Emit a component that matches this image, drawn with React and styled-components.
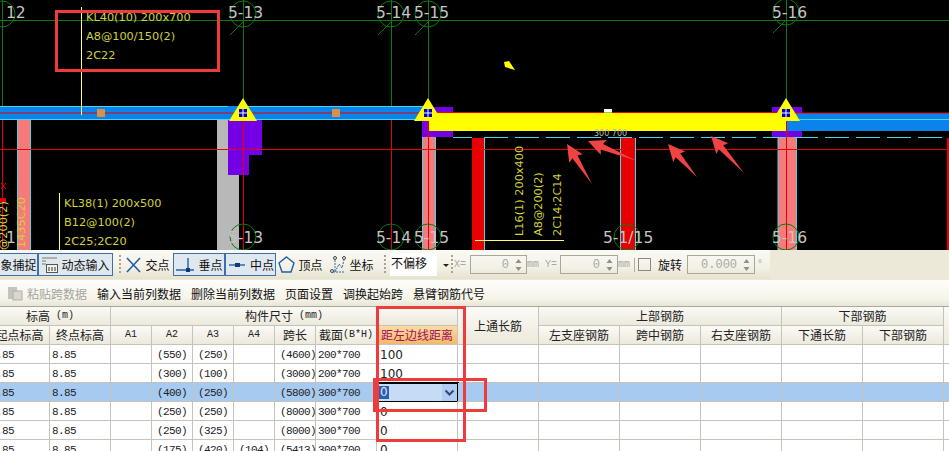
import React from "react"
import styled, { createGlobalStyle } from "styled-components"

const CJK = `"Noto Sans CJK SC", "Liberation Sans", sans-serif`

const GlobalStyle = createGlobalStyle`
  html, body {
    margin: 0;
    padding: 0;
    background: #ece9d8;
  }
`

const Page = styled.div`
  position: relative;
  width: 949px;
  height: 451px;
  overflow: hidden;
  font-family: ${CJK};
  font-size: 12px;
  color: #111;
  background: #ece9d8;
`

/* cad view */
const CadView = styled.div`
  height: 250px;
  background: #000;
`

const CadSvg = styled.svg`
  display: block;
`

const Label = styled.text`
  font-family: "DejaVu Sans", sans-serif;
  font-size: 11.3px;
  fill: #d2d23c;
`

const TinyLabel = styled.text`
  font-family: "DejaVu Sans", sans-serif;
  font-size: 8px;
  fill: #b8b8b8;
`

const AxisText = styled.text`
  font-family: "DejaVu Sans", sans-serif;
  font-size: 15.5px;
  fill: #c4c4c4;
`

const GREEN = "#0b7a12"
const RED = "#e80000"
const CYAN = "#49d6e6"
const PURPLE = "#7400e6"
const PINK = "#f57a7a"
const BLUE = "#0a83ea"
const YELLOW = "#ffff00"

const Bubble = ({ x, y, tail }) => (
  <g fill="none" stroke={GREEN}>
    <circle cx={x} cy={y} r="13" />
    {tail && <line x1={x} y1={y + 8} x2={x - 13} y2={y + 21} />}
  </g>
)

const Marker = ({ x }) => (
  <g>
    <polygon points={`${x},98 ${x + 14},121 ${x - 14},121`} fill={YELLOW} />
    <rect x={x - 4} y="109" width="8" height="8" fill="#0000c8" />
    <line x1={x} y1="109" x2={x} y2="117" stroke="#fff" />
    <line x1={x - 4} y1="113" x2={x + 4} y2="113" stroke="#fff" />
  </g>
)

const Arrow = ({ tip, tail }) => {
  const dx = tail[0] - tip[0]
  const dy = tail[1] - tip[1]
  const len = Math.hypot(dx, dy)
  const ux = dx / len
  const uy = dy / len
  const at = (along, side) =>
    `${tip[0] + ux * along - uy * side},${tip[1] + uy * along + ux * side}`
  return (
    <polygon
      fill="#f04444"
      points={[
        at(0, 0),
        at(17, 8),
        at(15, 3),
        at(len, 0),
        at(15, -3),
        at(17, -8),
      ].join(" ")}
    />
  )
}

const CadDrawing = () => (
  <CadSvg width="949" height="250" viewBox="0 0 949 250">
    {/* columns */}
    <rect x="17" y="120" width="14" height="130" fill={PINK} />
    <path d="M17.5 120V250M30.5 120V250" stroke={CYAN} fill="none" />
    <rect x="217" y="120" width="22" height="130" fill="#b8b8b8" />
    <path d="M228 120H262V155H249V175H228Z" fill={PURPLE} />
    <rect x="423" y="137" width="12" height="113" fill={PINK} />
    <path d="M422.5 137V250M435.5 137V250" stroke={CYAN} fill="none" />
    <rect x="472" y="138" width="12" height="112" fill={RED} />
    <rect x="621" y="138" width="15" height="112" fill={RED} />
    <path d="M484.5 138V250M620.5 138V250M635.5 138V250" stroke={CYAN} fill="none" />
    <rect x="778" y="137" width="19" height="113" fill={PINK} />
    <path d="M778 137V250M796.5 137V250" stroke={CYAN} fill="none" />
    <rect x="947" y="138" width="2" height="112" fill={RED} />
    <rect x="422" y="107" width="31" height="30" fill={PURPLE} />
    <rect x="772" y="107" width="30" height="30" fill={PURPLE} />

    {/* beams */}
    <rect x="0" y="106" width="427" height="14" fill={BLUE} />
    <path d="M0 106.5H228M0 119.5H427M244 106.5H427" stroke={CYAN} fill="none" />
    <line x1="0" y1="113" x2="427" y2="113" stroke={RED} />
    <rect x="787" y="113" width="162" height="18" fill={BLUE} />
    <line x1="787" y1="113" x2="949" y2="113" stroke={RED} />
    <line x1="787" y1="119.5" x2="949" y2="119.5" stroke={CYAN} />
    <rect x="428" y="113" width="359" height="18" fill={YELLOW} />
    <path d="M428 131V112.5H787" stroke={RED} fill="none" />
    <rect x="97" y="109" width="8" height="8" fill="#d8904a" />
    <rect x="332" y="109" width="8" height="8" fill="#d8904a" />
    <rect x="604" y="109" width="8" height="3" fill="#fff" />
    <rect x="604" y="112" width="8" height="1" fill="#7fd060" />

    {/* cyan edge lines */}
    <path d="M453 137.5H472" stroke={CYAN} fill="none" />
    <path
      d="M484 137.5H949"
      stroke={CYAN}
      strokeDasharray="24 7"
      fill="none"
    />

    {/* axis lines */}
    <line x1="0" y1="20.5" x2="949" y2="20.5" stroke={GREEN} />
    {[2, 243, 391, 428, 786].map((x) => (
      <React.Fragment key={x}>
        <line x1={x + 0.5} y1="0" x2={x + 0.5} y2="106" stroke={GREEN} />
        <line x1={x + 0.5} y1="120" x2={x + 0.5} y2="250" stroke={RED} />
      </React.Fragment>
    ))}
    <path d="M0 149.5H472M484 149.5H621M636 149.5H949" stroke={RED} fill="none" />
    {[243, 391, 428, 786].map((x) => (
      <Bubble key={x} x={x} y={x === 786 ? 12 : 14} tail />
    ))}
    <Bubble x={2} y={14} />
    {[243, 391, 428, 627, 786].map((x) => (
      <Bubble key={x} x={x} y={237} />
    ))}
    <Marker x={243} />
    <Marker x={428} />
    <Marker x={786} />

    {/* axis numbers */}
    <AxisText x="6" y="18">12</AxisText>
    <AxisText x="228" y="18">5-13</AxisText>
    <AxisText x="376" y="18">5-14</AxisText>
    <AxisText x="414" y="18">5-15</AxisText>
    <AxisText x="772" y="18">5-16</AxisText>
    <AxisText x="6" y="243">1</AxisText>
    <AxisText x="228" y="243">5-13</AxisText>
    <AxisText x="376" y="243">5-14</AxisText>
    <AxisText x="414" y="243">5-15</AxisText>
    <AxisText x="603" y="243">5-1/15</AxisText>
    <AxisText x="772" y="243">5-16</AxisText>

    {/* beam labels */}
    <line x1="81.5" y1="7" x2="81.5" y2="115" stroke="#ffff70" />
    <Label x="86" y="21">KL40(10) 200x700</Label>
    <Label x="86" y="40">A8@100/150(2)</Label>
    <Label x="86" y="59">2C22</Label>
    <line x1="59.5" y1="193" x2="59.5" y2="250" stroke="#ffff70" />
    <Label x="64" y="207">KL38(1) 200x500</Label>
    <Label x="64" y="226">B12@100(2)</Label>
    <Label x="64" y="245">2C25;2C20</Label>
    <line x1="475" y1="240.5" x2="564" y2="240.5" stroke="#ffff70" />
    <Label transform="translate(523 236) rotate(-90)">L16(1) 200x400</Label>
    <Label transform="translate(542 236) rotate(-90)">A8@200(2)</Label>
    <Label transform="translate(561 236) rotate(-90)">2C14;2C14</Label>
    <Label transform="translate(7 250) rotate(-90)">@200(2)</Label>
    <Label transform="translate(25 248) rotate(-90)">1435C20</Label>
    <TinyLabel x="594" y="136">300 700</TinyLabel>
    <path d="M1 183L6 189M6 183L1 189" stroke={RED} fill="none" />
    <rect x="0" y="198" width="6" height="4" fill={RED} />

    {/* pointer */}
    <polygon points="504,62 509,61 515,70 505,67" fill={YELLOW} />

    {/* red arrows */}
    <Arrow tip={[567, 144]} tail={[592, 184]} />
    <Arrow tip={[588, 141]} tail={[637, 161]} />
    <Arrow tip={[668, 144]} tail={[697, 177]} />
    <Arrow tip={[711, 136]} tail={[744, 173]} />
  </CadSvg>
)

/* snap toolbar */
const SnapRow = styled.div`
  height: 30px;
  display: flex;
  background: #ece9d8;
`

const SnapBar = styled.div`
  width: 770px;
  height: 29px;
  display: flex;
  align-items: center;
  background: linear-gradient(#fbfaf4, #f3f1e6 60%, #e6e2cf);
  white-space: nowrap;
`

const SnapItem = styled.div`
  width: ${(p) => p.$w}px;
  height: 23px;
  box-sizing: border-box;
  margin-left: ${(p) => p.$ml || 0}px;
  display: flex;
  align-items: center;
  justify-content: center;
  gap: 3px;
  flex: none;
  overflow: hidden;
  border: 1px solid ${(p) => (p.$on ? "#3f6fa8" : "transparent")};
  background: ${(p) => (p.$on ? "#dfe7ef" : "transparent")};
`

const Grip = styled.i`
  flex: none;
  width: 2px;
  height: 20px;
  margin-left: ${(p) => p.$ml}px;
  background: repeating-linear-gradient(#a8a48c 0 2px, transparent 2px 4px);
`

const Dropdown = styled.div`
  flex: none;
  width: 46px;
  height: 23px;
  margin-left: 4px;
  padding-left: 1px;
  background: #fff;
  line-height: 20px;
  font-size: 12px;
`

const DropArrow = styled.i`
  flex: none;
  width: 0;
  height: 0;
  margin: 2px 2px 0 6px;
  border-left: 3px solid transparent;
  border-right: 3px solid transparent;
  border-top: 3px solid #222;
`

const Dim = styled.span`
  flex: none;
  margin-left: ${(p) => p.$ml || 0}px;
  font-family: "Liberation Mono", monospace;
  font-size: 10px;
  color: #a8a8a0;
`

const Spinner = styled.div`
  flex: none;
  width: ${(p) => p.$w}px;
  height: 19px;
  box-sizing: border-box;
  margin-left: ${(p) => p.$ml || 0}px;
  padding-right: 4px;
  display: flex;
  align-items: center;
  justify-content: flex-end;
  gap: 6px;
  border: 1px solid #a8a89a;
  font-family: "Liberation Mono", monospace;
  font-size: 12px;
  color: #a8a8a0;
`

const SpinArrows = styled.svg`
  flex: none;
`

const Sep = styled.i`
  flex: none;
  width: 1px;
  height: 14px;
  margin-left: 4px;
  background: #b0ac98;
`

const Check = styled.i`
  flex: none;
  width: 11px;
  height: 11px;
  margin-left: 3px;
  border: 1px solid #8a8a80;
`

const Rotate = styled.span`
  flex: none;
  margin: 0 5px 0 7px;
`

const Spin = ({ w, ml, value }) => (
  <Spinner $w={w} $ml={ml}>
    {value}
    <SpinArrows width="7" height="14" viewBox="0 0 7 14" fill="#8f8f88">
      <polygon points="3.5,1 6.5,5 0.5,5" />
      <polygon points="3.5,13 6.5,9 0.5,9" />
    </SpinArrows>
  </Spinner>
)

const IconSvg = styled.svg`
  flex: none;
`

const Icon = ({ children, w = 22 }) => (
  <IconSvg width={w} height="20" viewBox={`0 0 ${w} 20`} fill="none">
    {children}
  </IconSvg>
)

const SnapToolbar = () => (
  <SnapRow>
    <SnapBar>
      <SnapItem $w={39} $ml={-1} $on>象捕捉</SnapItem>
      <SnapItem $w={75} $on>
        <Icon w={17}>
          <path d="M1 3H16M1 6H5M1 9H5" stroke="#7a7a6a" />
          <rect x="5.5" y="9.5" width="11" height="8" fill="#f4f2e6" stroke="#555" />
          <path d="M8 12V16M11 12V16M14 12V16" stroke="#333" />
        </Icon>
        动态输入
      </SnapItem>
      <Grip $ml={6} />
      <SnapItem $w={47} $ml={3}>
        <Icon w={17}>
          <path d="M2 3L15 17M15 3L2 17" stroke="#1f5fa8" strokeWidth="1.6" />
        </Icon>
        交点
      </SnapItem>
      <SnapItem $w={52} $ml={2} $on>
        <Icon w={20}>
          <path d="M1 15H19M13 3V15" stroke="#1f5fa8" strokeWidth="1.4" />
          <rect x="11" y="13" width="4" height="4" fill="#123a78" />
        </Icon>
        垂点
      </SnapItem>
      <SnapItem $w={51} $on>
        <Icon w={20}>
          <path d="M2 10H18" stroke="#1f5fa8" strokeWidth="1.4" />
          <rect x="8" y="8" width="5" height="4" fill="#123a78" />
        </Icon>
        中点
      </SnapItem>
      <SnapItem $w={47} $ml={1}>
        <Icon w={17}>
          <polygon points="8.5,2 16,8 13,17 4,17 1,8" stroke="#1f5fa8" strokeWidth="1.4" />
        </Icon>
        顶点
      </SnapItem>
      <SnapItem $w={50} $ml={3}>
        <Icon w={16}>
          <path d="M3 17H14M5 17L9 9L12 13L14 5M5 5V17" stroke="#2a6ab0" strokeDasharray="2 1" />
          <circle cx="2" cy="16" r="1.5" stroke="#444" />
          <circle cx="5" cy="3" r="1.5" stroke="#444" />
          <circle cx="14" cy="3" r="1.5" stroke="#444" />
        </Icon>
        坐标
      </SnapItem>
      <Grip $ml={7} />
      <Dropdown>不偏移</Dropdown>
      <DropArrow />
      <Grip $ml={0} />
      <Dim $ml={1}>X=</Dim>
      <Spin w={57} ml={4} value="0" />
      <Dim>mm</Dim>
      <Dim $ml={6}>Y=</Dim>
      <Spin w={58} ml={3} value="0" />
      <Dim>mm</Dim>
      <Sep />
      <Check />
      <Rotate>旋转</Rotate>
      <Spin w={68} value="0.000" />
      <Dim $ml={2}>°</Dim>
    </SnapBar>
  </SnapRow>
)

/* edit toolbar */
const EditBar = styled.div`
  height: 26px;
  display: flex;
  align-items: center;
  gap: 10px;
  padding-left: 7px;
  background: linear-gradient(#fdfdf9, #f6f4ea 70%, #e9e6d6);
  white-space: nowrap;
`

const EditItem = styled.span`
  display: flex;
  align-items: center;
  gap: 4px;
  color: ${(p) => (p.$disabled ? "#a5a59c" : "#111")};
`

const EditToolbar = () => (
  <EditBar>
    <EditItem $disabled>
      <svg width="16" height="16" viewBox="0 0 16 16">
        <rect x="1" y="2" width="9" height="12" fill="#c4c4bc" />
        <rect x="6" y="6" width="9" height="9" fill="#d8d8d0" stroke="#b0b0a8" />
      </svg>
      粘贴跨数据
    </EditItem>
    <EditItem>输入当前列数据</EditItem>
    <EditItem>删除当前列数据</EditItem>
    <EditItem>页面设置</EditItem>
    <EditItem>调换起始跨</EditItem>
    <EditItem>悬臂钢筋代号</EditItem>
  </EditBar>
)

/* span table */
const COLUMNS = "60px 61px 41px 41px 41px 41px 41px 61px 81px 81px 81px 81px 81px 81px 81px 40px"

const GridTable = styled.div`
  margin-left: -10px;
  width: 982px;
  display: grid;
  grid-template-columns: ${COLUMNS};
  grid-auto-rows: 19px;
  border-top: 1px solid #a8a8a0;
`

const Head = styled.div`
  grid-column: ${(p) => p.$col || "auto"};
  grid-row: ${(p) => p.$row || "auto"};
  box-sizing: border-box;
  display: flex;
  align-items: center;
  justify-content: center;
  white-space: nowrap;
  overflow: hidden;
  padding-bottom: 1px;
  color: ${(p) => (p.$hot ? "#a01060" : "#222")};
  background: ${(p) =>
    p.$hot
      ? "linear-gradient(#fbdca4, #f4b868)"
      : "linear-gradient(#fbfaf5, #ece9dc)"};
  border-right: 1px solid #c4c4bc;
  border-bottom: 1px solid #c4c4bc;
`

const Small = styled.span`
  font-family: "Liberation Mono", monospace;
  font-size: 10px;
  white-space: pre;
`

const Cell = styled.div`
  position: relative;
  box-sizing: border-box;
  padding-left: ${(p) => p.$inset ?? 1}px;
  white-space: nowrap;
  line-height: 20px;
  font-family: ${(p) =>
    p.$wide ? `"DejaVu Sans", sans-serif` : `"Liberation Mono", monospace`};
  font-size: ${(p) => (p.$wide ? 12 : 11)}px;
  letter-spacing: ${(p) => (p.$wide ? 0 : -0.6)}px;
  color: #222;
  background: ${(p) => (p.$selected ? "#a6caf0" : "#fff")};
  border-right: 1px solid #c4c4bc;
  border-bottom: 1px solid #c4c4bc;
`

const Editor = styled.div`
  position: absolute;
  left: 0;
  top: -1px;
  width: 82px;
  height: 21px;
  box-sizing: border-box;
  padding-left: 2px;
  display: flex;
  align-items: center;
  justify-content: space-between;
  background: #c6dbf6;
  border-top: 2px solid #000;
  border-bottom: 2px solid #000;
  border-right: 2px solid #000;
`

const EditorValue = styled.span`
  padding: 0 1px;
  line-height: 13px;
  color: #dce8ff;
  background: #2a5fb0;
`

const EditorDrop = styled.div`
  width: 15px;
  height: 17px;
  display: flex;
  align-items: center;
  justify-content: center;
  background: #b2cbf0;
`

const Handle = styled.i`
  position: absolute;
  right: -4px;
  bottom: -4px;
  width: 4px;
  height: 4px;
  background: #808080;
`

const ROWS = [
  ["(550)", "(250)", "", "(4600)", "200*700", "100"],
  ["(300)", "(100)", "", "(3000)", "200*700", "100"],
  ["(400)", "(250)", "", "(5800)", "300*700", "0"],
  ["(250)", "(250)", "", "(8000)", "300*700", "0"],
  ["(250)", "(325)", "", "(8000)", "300*700", "0"],
  ["(175)", "(420)", "(104)", "(5413)", "300*700", "0"],
]

const TableHeader = () => (
  <>
    <Head $col="1 / span 2" $row="1">标高<Small> (m)</Small></Head>
    <Head $col="3 / span 7" $row="1">构件尺寸<Small> (mm)</Small></Head>
    <Head $col="10" $row="1 / span 2">上通长筋</Head>
    <Head $col="11 / span 3" $row="1">上部钢筋</Head>
    <Head $col="14 / span 2" $row="1">下部钢筋</Head>
    <Head $col="16" $row="1 / span 2" />
    <Head $col="1" $row="2">起点标高</Head>
    <Head $col="2" $row="2">终点标高</Head>
    {["A1", "A2", "A3", "A4"].map((name, i) => (
      <Head key={name} $col={3 + i} $row="2"><Small>{name}</Small></Head>
    ))}
    <Head $col="7" $row="2">跨长</Head>
    <Head $col="8" $row="2">截面<Small>(B*H)</Small></Head>
    <Head $col="9" $row="2" $hot>距左边线距离</Head>
    <Head $col="11" $row="2">左支座钢筋</Head>
    <Head $col="12" $row="2">跨中钢筋</Head>
    <Head $col="13" $row="2">右支座钢筋</Head>
    <Head $col="14" $row="2">下通长筋</Head>
    <Head $col="15" $row="2">下部钢筋</Head>
  </>
)

const Row = ({ row, selected }) => {
  const [a2, a3, a4, span, section, offset] = row
  return (
    <>
      <Cell $selected={selected} $inset={0}>8.85</Cell>
      <Cell $selected={selected} $inset={2}>8.85</Cell>
      <Cell $selected={selected} />
      {[a2, a3, a4, span].map((text, i) => (
        <Cell key={i} $selected={selected} $inset={5}>{text}</Cell>
      ))}
      <Cell $selected={selected} $inset={2}>{section}</Cell>
      <Cell $selected={selected} $wide $inset={3}>
        {selected ? (
          <Editor>
            <EditorValue>{offset}</EditorValue>
            <EditorDrop>
              <svg width="11" height="8" viewBox="0 0 11 8" fill="none">
                <path d="M1.5 1.5L5.5 5.5L9.5 1.5" stroke="#2a4a80" strokeWidth="2" />
              </svg>
            </EditorDrop>
            <Handle />
          </Editor>
        ) : (
          offset
        )}
      </Cell>
      {Array.from({ length: 7 }, (_, i) => (
        <Cell key={i} $selected={selected} />
      ))}
    </>
  )
}

/* hand drawn red markup on top of the screenshot */
const Callout = styled.div`
  position: absolute;
  left: ${(p) => p.$x}px;
  top: ${(p) => p.$y}px;
  width: ${(p) => p.$w}px;
  height: ${(p) => p.$h}px;
  box-sizing: border-box;
  border: 3px solid #ee3c3c;
  pointer-events: none;
`

export default function App() {
  return (
    <Page>
      <GlobalStyle />
      <CadView>
        <CadDrawing />
      </CadView>
      <SnapToolbar />
      <EditToolbar />
      <GridTable>
        <TableHeader />
        {ROWS.map((row, i) => (
          <Row key={i} row={row} selected={i === 2} />
        ))}
      </GridTable>
      <Callout $x={55} $y={10} $w={165} $h={62} />
      <Callout $x={376} $y={306} $w={90} $h={136} />
      <Callout $x={373} $y={378} $w={114} $h={34} />
    </Page>
  )
}
